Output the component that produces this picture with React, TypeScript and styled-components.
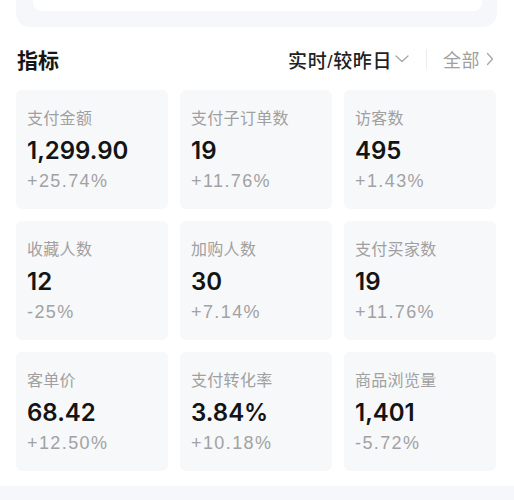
import styled, { createGlobalStyle } from "styled-components";

const GlobalStyle = createGlobalStyle`
    body {
        margin: 0;
        background: #ffffff;
        font-family: "Liberation Sans", "Noto Sans CJK SC", sans-serif;
    }
`;

type Metric = { label: string; value: string; change: string };

const metrics: Metric[] = [
    {label: "支付金额", value: "1,299.90", change: "+25.74%"},
    {label: "支付子订单数", value: "19", change: "+11.76%"},
    {label: "访客数", value: "495", change: "+1.43%"},
    {label: "收藏人数", value: "12", change: "-25%"},
    {label: "加购人数", value: "30", change: "+7.14%"},
    {label: "支付买家数", value: "19", change: "+11.76%"},
    {label: "客单价", value: "68.42", change: "+12.50%"},
    {label: "支付转化率", value: "3.84%", change: "+10.18%"},
    {label: "商品浏览量", value: "1,401", change: "-5.72%"},
];

const ChevronDown = () => (
    <svg width="14" height="8" viewBox="0 0 14 8" fill="none">
        <path d="M1 1l6 5.5L13 1" stroke="#a8a8a8" strokeWidth="1.3" strokeLinecap="round" strokeLinejoin="round"/>
    </svg>
);

const ChevronRight = () => (
    <svg width="8" height="14" viewBox="0 0 8 14" fill="none">
        <path d="M1.5 1.5L6.5 7l-5 5.5" stroke="#a8a8a8" strokeWidth="1.3" strokeLinecap="round" strokeLinejoin="round"/>
    </svg>
);

export default function App() {
    return <Page>
        <GlobalStyle/>
        <Content>
            <TopCard>
                <TopInner/>
            </TopCard>

            <Header>
                <Title>指标</Title>
                <HeaderRight>
                    <Period>实时/较昨日</Period>
                    <ChevronDown/>
                    <Divider/>
                    <AllLink>全部</AllLink>
                    <ChevronRight/>
                </HeaderRight>
            </Header>

            <Grid>
                {metrics.map((m) => (
                    <Card key={m.label}>
                        <Label>{m.label}</Label>
                        <Value>{m.value}</Value>
                        <Change>{m.change}</Change>
                    </Card>
                ))}
            </Grid>
        </Content>
        <BottomBand/>
    </Page>
}

const Page = styled.div`
    width: 514px;
    height: 500px;
    overflow: hidden;
    display: flex;
    flex-direction: column;
`;

const Content = styled.div`
    padding: 0 17px 0 16px;
`;

const TopCard = styled.div`
    height: 27px;
    box-sizing: border-box;
    background: #f6f7fa;
    border-radius: 0 0 14px 14px;
    padding: 0 15px 0 17px;
`;

const TopInner = styled.div`
    height: 11px;
    background: #ffffff;
    border-radius: 0 0 8px 8px;
`;

const Header = styled.div`
    display: flex;
    align-items: center;
    justify-content: space-between;
    height: 30px;
    margin: 17px 0 16px 1px;
`;

const Title = styled.div`
    font-size: 21px;
    font-weight: 700;
    color: #161616;
`;

const HeaderRight = styled.div`
    display: flex;
    align-items: center;
    padding-right: 3px;

    & > svg:first-of-type {
        margin: 0 17px 0 3px;
    }
`;

const Period = styled.span`
    font-size: 19px;
    font-weight: 500;
    letter-spacing: 0.6px;
    color: #222222;
`;

const Divider = styled.div`
    width: 1px;
    height: 20px;
    background: #ececec;
    margin-right: 16px;
`;

const AllLink = styled.span`
    font-size: 18px;
    letter-spacing: 0.5px;
    color: #a0a0a0;
    margin-right: 6px;
`;

const Grid = styled.div`
    display: grid;
    grid-template-columns: repeat(3, 152px);
    grid-auto-rows: 119px;
    gap: 12px;
`;

const Card = styled.div`
    background: #f7f8fa;
    border-radius: 6px;
    padding: 18px 11px 0;
    display: flex;
    flex-direction: column;
`;

const Label = styled.div`
    font-size: 16px;
    line-height: 22px;
    letter-spacing: 0.3px;
    color: #a0a0a0;
`;

const Value = styled.div`
    font-family: Inter, "Liberation Sans", sans-serif;
    font-size: 24px;
    line-height: 30px;
    margin-top: 6px;
    font-weight: 600;
    letter-spacing: 0px;
    color: #141414;
`;

const Change = styled.div`
    font-size: 18px;
    line-height: 24px;
    margin-top: 3px;
    letter-spacing: 1.4px;
    color: #a2a2a2;
`;

const BottomBand = styled.div`
    margin-top: 15px;
    flex: 1;
    background: #f5f7fb;
`;
